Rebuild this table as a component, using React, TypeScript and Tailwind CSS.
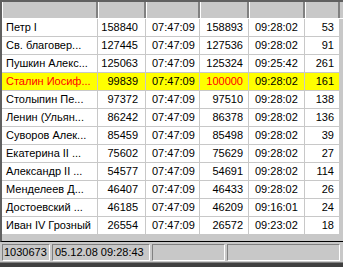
import React from "react";

type Row = { name: string; a: string; t1: string; b: string; t2: string; c: string; hl?: boolean };

const rows: Row[] = [
  { name: "Петр I", a: "158840", t1: "07:47:09", b: "158893", t2: "09:28:02", c: "53" },
  { name: "Св. благовер...", a: "127445", t1: "07:47:09", b: "127536", t2: "09:28:02", c: "91" },
  { name: "Пушкин Алекс...", a: "125063", t1: "07:47:09", b: "125324", t2: "09:25:42", c: "261" },
  { name: "Сталин Иосиф...", a: "99839", t1: "07:47:09", b: "100000", t2: "09:28:02", c: "161", hl: true },
  { name: "Столыпин Пе...", a: "97372", t1: "07:47:09", b: "97510", t2: "09:28:02", c: "138" },
  { name: "Ленин (Ульян...", a: "86242", t1: "07:47:09", b: "86378", t2: "09:28:02", c: "136" },
  { name: "Суворов Алек...", a: "85459", t1: "07:47:09", b: "85498", t2: "09:28:02", c: "39" },
  { name: "Екатерина II ...", a: "75602", t1: "07:47:09", b: "75629", t2: "09:28:02", c: "27" },
  { name: "Александр II ...", a: "54577", t1: "07:47:09", b: "54691", t2: "09:28:02", c: "114" },
  { name: "Менделеев Д...", a: "46407", t1: "07:47:09", b: "46433", t2: "09:28:02", c: "26" },
  { name: "Достоевский ...", a: "46185", t1: "07:47:09", b: "46209", t2: "09:16:01", c: "24" },
  { name: "Иван IV Грозный", a: "26554", t1: "07:47:09", b: "26572", t2: "09:23:02", c: "18" },
];

const cell = "h-full flex items-center border-r border-[#c8c8c8] shrink-0";

export default function App() {
  return (
    <div
      className="w-[343px] h-[267px] bg-[#c8c8c8] flex flex-col overflow-hidden text-black"
      style={{ fontFamily: '"Liberation Sans", Arial, sans-serif', fontSize: "11px" }}
    >
      <div className="h-[242px] flex flex-col border-t-2 border-l-2 border-t-[#606060] border-l-[#606060] border-b border-b-black shrink-0">
        {/* header */}
        <div className="flex h-[17px] shrink-0 border-b border-b-white">
          {[96, 48, 54, 49, 56, 35].map((w, i) => (
            <div
              key={i}
              className="h-full bg-[#c8c8c8] border-r-2 border-r-[#808080] border-l border-l-white shrink-0"
              style={{ width: w }}
            />
          ))}
        </div>
        <div className="flex flex-col bg-[#c8c8c8]">
          {rows.map((r, i) => (
            <div key={i} className="flex h-[18px] shrink-0">
              <div className={`flex h-full border-b border-[#c8c8c8] ${r.hl ? "bg-[#ffff00]" : "bg-white"}`}>
                <div className={`${cell} w-[96px] pl-[4px] whitespace-nowrap ${r.hl ? "text-[#ff0000]" : ""}`}>{r.name}</div>
                <div className={`${cell} w-[48px] justify-end pr-[7px]`}>{r.a}</div>
                <div className={`${cell} w-[54px] pl-[6px]`}>{r.t1}</div>
                <div className={`${cell} w-[49px] justify-end pr-[5px] ${r.hl ? "text-[#ff0000]" : ""}`}>{r.b}</div>
                <div className={`${cell} w-[56px] pl-[6px]`}>{r.t2}</div>
                <div className={`${cell} w-[35px] justify-end pr-[5px]`}>{r.c}</div>
              </div>
            </div>
          ))}
        </div>
      </div>
      {/* status bar */}
      <div className="flex gap-[2px] pl-[2px] pt-[2px] h-[20px] shrink-0">
        <div className="w-[48px] h-[17px] border border-t-[#808080] border-l-[#808080] border-b-white border-r-white flex items-center pl-[1px]">1030673</div>
        <div className="w-[98px] h-[17px] border border-t-[#808080] border-l-[#808080] border-b-white border-r-white flex items-center pl-[2px] whitespace-nowrap">05.12.08 09:28:43</div>
        <div className="w-[73px] h-[17px] border border-t-[#808080] border-l-[#808080] border-b-white border-r-white" />
        <div className="w-[113px] h-[17px] border border-t-[#808080] border-l-[#808080] border-b-white border-r-white" />
      </div>
      <div className="flex-1 border-t border-t-[#808080] bg-[#404040]" />
    </div>
  );
}
